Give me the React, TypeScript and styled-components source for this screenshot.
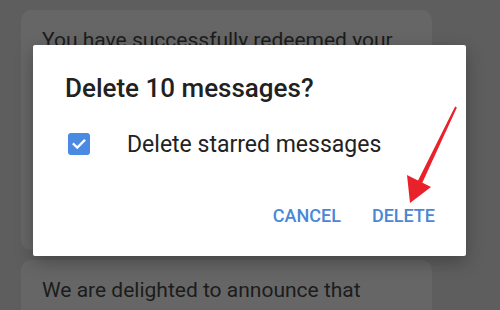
import React from "react";
import styled, { createGlobalStyle } from "styled-components";

const Global = createGlobalStyle`
  html, body { margin: 0; padding: 0; }
  body {
    width: 500px;
    height: 310px;
    overflow: hidden;
    background: #5e5e5e;
    font-family: Roboto, "Noto Sans", sans-serif;
  }
`;

const Page = styled.div`
  position: relative;
  width: 500px;
  height: 310px;
  overflow: hidden;
`;

const Feed = styled.div`
  display: flex;
  flex-direction: column;
  gap: 10px;
  padding: 10px 0 0 21px;
`;

const Card = styled.div<{ $h: number }>`
  width: 411px;
  height: ${(p) => p.$h}px;
  box-sizing: border-box;
  background: #666666;
  border-radius: 10px;
  padding: 16px 21px;
  font-size: 21px;
  line-height: 28px;
  color: #1c1c1c;
`;

const Dialog = styled.div`
  position: absolute;
  left: 33px;
  top: 45px;
  width: 433px;
  height: 211px;
  box-sizing: border-box;
  background: #ffffff;
  border-radius: 2px;
  box-shadow: 0 6px 18px rgba(0, 0, 0, 0.28);
  padding: 27px 31px 0 32px;
  display: flex;
  flex-direction: column;
`;

const Title = styled.div`
  font-size: 26px;
  line-height: 32px;
  font-weight: 500;
  color: #212121;
`;

const CheckRow = styled.div`
  margin-top: 29px;
  display: flex;
  align-items: center;
  height: 22px;
  padding-left: 3px;
`;

const Box = styled.div`
  width: 22px;
  height: 22px;
  border-radius: 3px;
  background: #4a8ae2;
  display: flex;
  align-items: center;
  justify-content: center;
`;

const CheckLabel = styled.span`
  margin-left: 37px;
  font-size: 23px;
  line-height: 22px;
  color: #222222;
  padding-top: 2px;
`;

const Actions = styled.div`
  margin-top: 49px;
  display: flex;
  justify-content: flex-end;
  gap: 31px;
`;

const Action = styled.span`
  font-size: 18px;
  line-height: 24px;
  font-weight: 500;
  color: #4a87d6;
`;

const ArrowLayer = styled.svg`
  position: absolute;
  left: 0;
  top: 0;
  pointer-events: none;
`;

export default function App() {
  return (
    <Page>
      <Global />
      <Feed>
        <Card $h={240}>You have successfully redeemed your</Card>
        <Card $h={80}>We are delighted to announce that</Card>
      </Feed>
      <Dialog>
        <Title>Delete 10 messages?</Title>
        <CheckRow>
          <Box>
            <svg width="16" height="16" viewBox="0 0 16 16">
              <path d="M2.8 8.3 L6.3 11.6 L13.2 4.6" fill="none" stroke="#fff" strokeWidth="2.4" strokeLinecap="square" />
            </svg>
          </Box>
          <CheckLabel>Delete starred messages</CheckLabel>
        </CheckRow>
        <Actions>
          <Action>CANCEL</Action>
          <Action>DELETE</Action>
        </Actions>
      </Dialog>
      <ArrowLayer width="500" height="310" viewBox="0 0 500 310">
        <polygon points="456.9,107.4 455.1,106.6 417.8,180.9 422.2,183.1" fill="#e8212b" />
        <polygon points="410,203 407,175 431,187" fill="#e8212b" />
      </ArrowLayer>
    </Page>
  );
}
